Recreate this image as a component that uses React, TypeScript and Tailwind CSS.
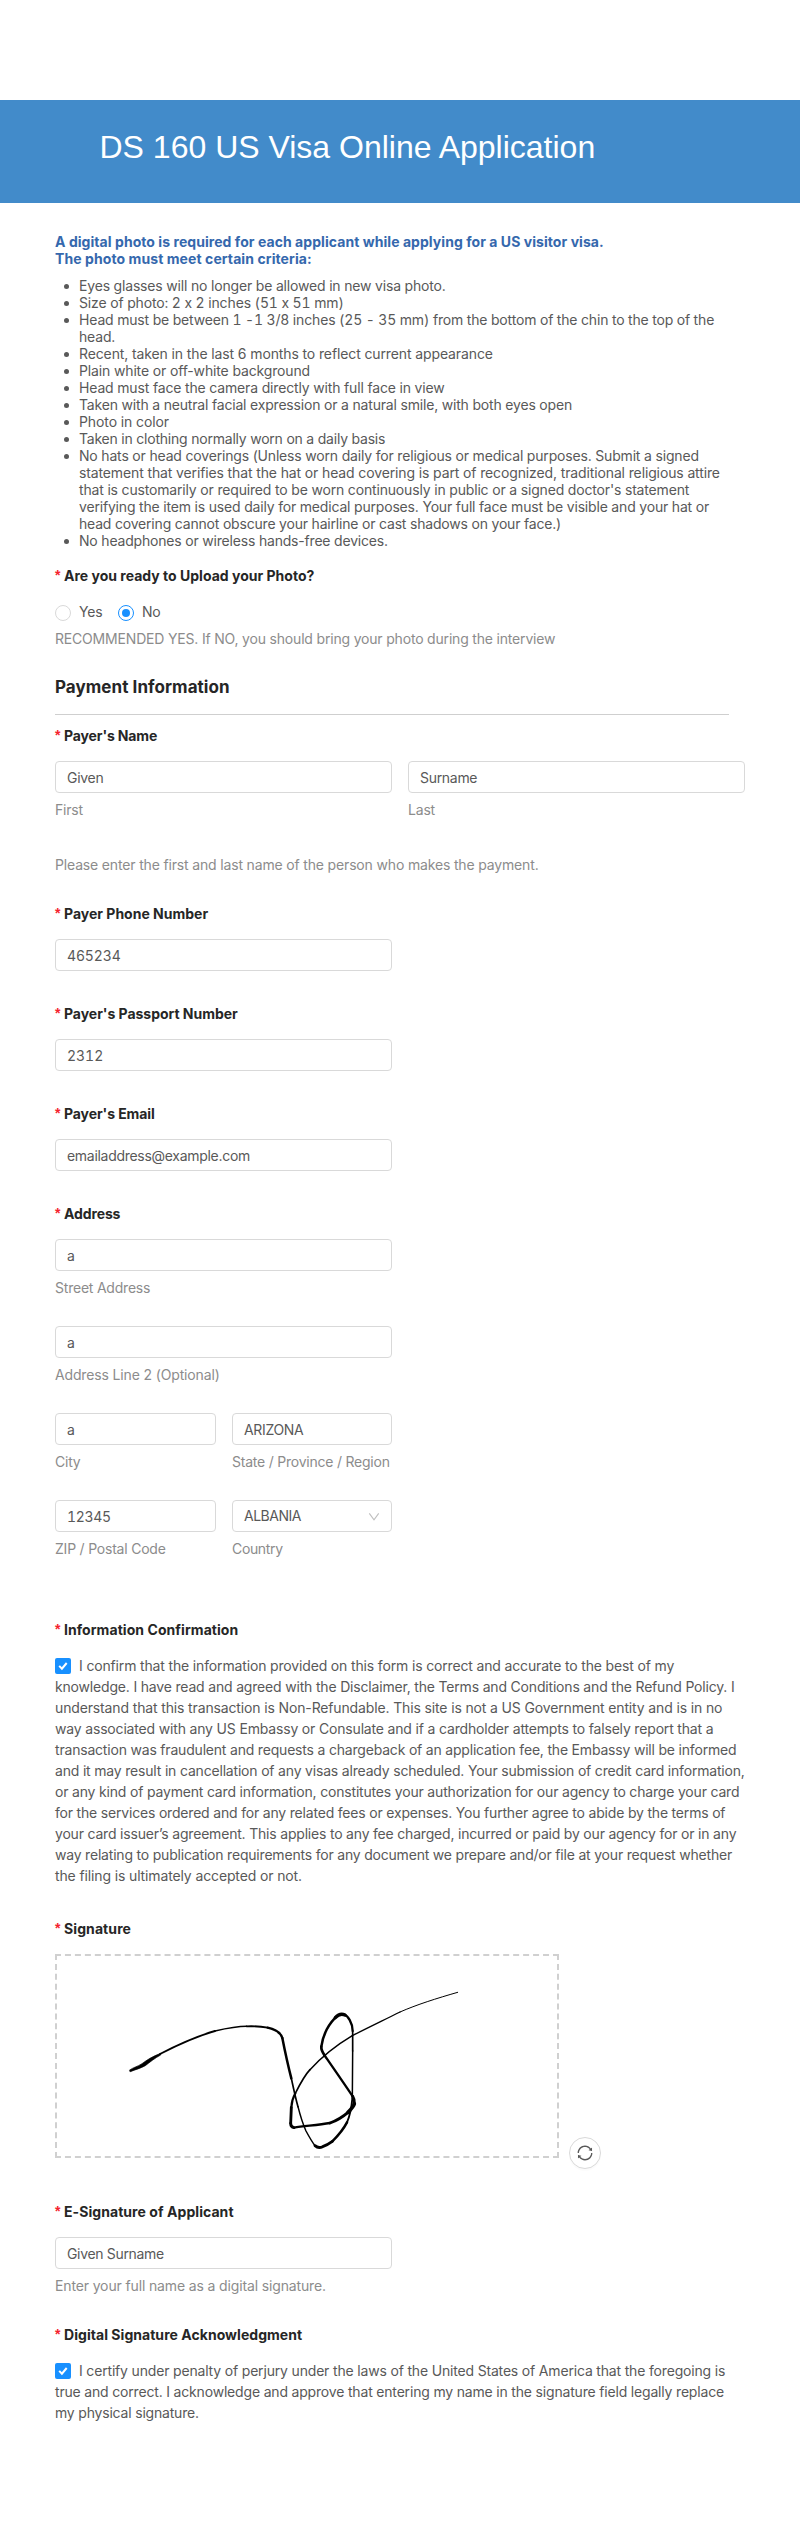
import React from "react";
import { AiOutlineSync } from "react-icons/ai";

type Line = [text: string, tracking: string];

const criteria: Line[][] = [
  [["Eyes glasses will no longer be allowed in new visa photo.", "tracking-[-0.179px]"]],
  [["Size of photo: 2 x 2 inches (51 x 51 mm)", "tracking-[-0.126px] tabular-nums"]],
  [
    ["Head must be between 1 -1 3/8 inches (25 - 35 mm) from the bottom of the chin to the top of the", "tracking-[-0.154px] tabular-nums"],
    ["head.", "tracking-[-0.18px]"],
  ],
  [["Recent, taken in the last 6 months to reflect current appearance", "tracking-[-0.118px]"]],
  [["Plain white or off-white background", "tracking-[-0.144px]"]],
  [["Head must face the camera directly with full face in view", "tracking-[-0.163px]"]],
  [["Taken with a neutral facial expression or a natural smile, with both eyes open", "tracking-[-0.185px]"]],
  [["Photo in color", "tracking-[-0.105px]"]],
  [["Taken in clothing normally worn on a daily basis", "tracking-[-0.215px]"]],
  [
    ["No hats or head coverings (Unless worn daily for religious or medical purposes. Submit a signed", "tracking-[-0.179px]"],
    ["statement that verifies that the hat or head covering is part of recognized, traditional religious attire", "tracking-[-0.127px]"],
    ["that is customarily or required to be worn continuously in public or a signed doctor's statement", "tracking-[-0.171px]"],
    ["verifying the item is used daily for medical purposes. Your full face must be visible and your hat or", "tracking-[-0.183px]"],
    ["head covering cannot obscure your hairline or cast shadows on your face.)", "tracking-[-0.194px]"],
  ],
  [["No headphones or wireless hands-free devices.", "tracking-[-0.19px]"]],
];

const confirmation: Line[] = [
  ["I confirm that the information provided on this form is correct and accurate to the best of my", "tracking-[-0.155px]"],
  ["knowledge. I have read and agreed with the Disclaimer, the Terms and Conditions and the Refund Policy. I", "tracking-[-0.182px]"],
  ["understand that this transaction is Non-Refundable. This site is not a US Government entity and is in no", "tracking-[-0.14px]"],
  ["way associated with any US Embassy or Consulate and if a cardholder attempts to falsely report that a", "tracking-[-0.172px]"],
  ["transaction was fraudulent and requests a chargeback of an application fee, the Embassy will be informed", "tracking-[-0.194px]"],
  ["and it may result in cancellation of any visas already scheduled. Your submission of credit card information,", "tracking-[-0.187px]"],
  ["or any kind of payment card information, constitutes your authorization for our agency to charge your card", "tracking-[-0.184px]"],
  ["for the services ordered and for any related fees or expenses. You further agree to abide by the terms of", "tracking-[-0.19px]"],
  ["your card issuer’s agreement. This applies to any fee charged, incurred or paid by our agency for or in any", "tracking-[-0.197px]"],
  ["way relating to publication requirements for any document we prepare and/or file at your request whether", "tracking-[-0.199px]"],
  ["the filing is ultimately accepted or not.", "tracking-[-0.13px]"],
];

const acknowledgment: Line[] = [
  ["I certify under penalty of perjury under the laws of the United States of America that the foregoing is", "tracking-[-0.174px]"],
  ["true and correct. I acknowledge and approve that entering my name in the signature field legally replace", "tracking-[-0.181px]"],
  ["my physical signature.", "tracking-[-0.192px]"],
];

function Label({ children, tracking = "tracking-[0.011px]" }: { children: string; tracking?: string }) {
  return (
    <div className="mb-[15px] flex h-[21px] font-bold text-[#262626]">
      <span className="w-[9px] font-['Liberation_Sans',sans-serif] text-[#f5222d]">*</span>
      <span className={tracking}>{children}</span>
    </div>
  );
}

function Input({ children, width = "w-[337px]", tracking = "tracking-[-0.3px]" }: { children: string; width?: string; tracking?: string }) {
  return (
    <div className={`h-8 rounded-[4px] border border-[#d9d9d9] bg-white pt-[5px] pl-[11px] ${width} ${tracking}`}>{children}</div>
  );
}

function Hint({ children, tracking = "tracking-[-0.2px]" }: { children: string; tracking?: string }) {
  return <div className={`mt-1.5 h-[21px] text-[#8c8c8c] ${tracking}`}>{children}</div>;
}

function Checked({ lines }: { lines: Line[] }) {
  return (
    <div>
      {lines.map(([text, tracking], i) => (
        <div key={i} className={`flex h-[21px] ${tracking}`}>
          {i === 0 && (
            <span className="mt-[3px] mr-2 flex size-4 shrink-0 items-center justify-center rounded-[2px] bg-[#1890ff]">
              <svg width="16" height="16" viewBox="0 0 16 16" fill="none" stroke="#fff" strokeWidth="2">
                <path d="M4.2 7.9 L6.9 10.7 L11.7 5" />
              </svg>
            </span>
          )}
          <span>{text}</span>
        </div>
      ))}
    </div>
  );
}

function Radio({ label, on = false }: { label: string; on?: boolean }) {
  return (
    <div className="flex w-[63px] tracking-[-0.18px]">
      <span className={`mt-1 mr-2 flex size-4 items-center justify-center rounded-full border ${on ? "border-[#1890ff]" : "border-[#d9d9d9]"}`}>
        {on && <span className="size-2 rounded-full bg-[#1890ff]" />}
      </span>
      {label}
    </div>
  );
}

const strokes: [string, number][] = [
  ["M180 252 C230 226 290 199 345 183", 5.5],
  ["M345 183 C380 175 410 169 440 169", 4.5],
  ["M440 169 C465 168 487 170 503 173", 5.5],
  ["M503 173 C525 178 542 187 547 204", 7],
  ["M547 204 C557 255 565 290 574 325", 7.5],
  ["M574 325 C582 362 588 390 594 410", 5],
  ["M594 410 C602 442 610 465 618 483 Q636 516 645 527", 4.5],
  ["M645 527 Q655 536 668 530 Q682 525 697 514", 8.5],
  ["M697 514 Q727 484 741 457", 7.5],
  ["M741 457 Q753 430 757 385", 5.5],
  ["M757 385 L758 243", 4.5],
  ["M758 243 L758 183", 5],
  ["M758 183 C758 158 743 137 733 134", 7],
  ["M735 135 C724 130 714 134 706 143", 10],
  ["M706 143 C682 168 668 200 664 230", 7.5],
  ["M664 230 Q663 240 673 255", 8],
  ["M673 255 C700 294 732 340 758 379", 7],
  ["M758 379 Q764 388 763 401", 9],
  ["M763 401 Q761 410 744 427", 11],
  ["M744 427 Q720 448 690 459", 8.5],
  ["M690 459 C655 465 615 468 582 473", 7],
  ["M582 473 Q572 472 572 460", 8.5],
  ["M572 460 L574 412", 8.5],
  ["M574 412 Q575 390 586 370", 6.5],
  ["M586 370 C600 342 613 317 630 299", 5],
  ["M630 299 C665 261 710 225 757 197", 4.5],
  ["M757 197 C810 170 850 151 900 126", 4],
  ["M900 126 C950 104 1010 85 1073 67", 3],
];

function Signature() {
  return (
    <svg width="500" height="200" viewBox="-129 -42 1500 600" fill="none" stroke="#000" strokeLinecap="round">
      <path fill="#000" strokeWidth="2" strokeLinejoin="round" d="M89 300 C100 292 112 290 126 281 C142 269 158 259 182 250 L182 255 C164 265 150 276 136 287 C122 295 108 298 91 305 Z" />
      {strokes.map(([d, w]) => (
        <path key={d} d={d} strokeWidth={w} />
      ))}
    </svg>
  );
}

export default function App() {
  return (
    <div className="h-[2531px] w-[800px] overflow-hidden bg-white pt-[100px] font-['Inter','Liberation_Sans',sans-serif] text-[14px] leading-[21px] whitespace-nowrap text-[#595959] [font-feature-settings:'calt'_0]">
      <header className="h-[103px] bg-[#428bca] pt-[29px] pl-[99.5px]">
        <h1 className="font-['Liberation_Sans',sans-serif] text-[32px] leading-[36px] text-white">DS 160 US Visa Online Application</h1>
      </header>

      <main className="pt-[30px] pl-[55px]">
        <div className="leading-[17px] font-bold text-[#3568ad]">
          <p className="tracking-[0.056px]">A digital photo is required for each applicant while applying for a US visitor visa.</p>
          <p className="tracking-[0.083px]">The photo must meet certain criteria:</p>
        </div>

        <ul className="mt-2.5 leading-[17px]">
          {criteria.map((lines, i) => (
            <li key={i} className="flex">
              <span className="mt-[7px] mr-[10px] ml-[9px] size-[5px] shrink-0 rounded-full bg-[#595959]" />
              <div>
                {lines.map(([text, tracking]) => (
                  <div key={text} className={tracking}>{text}</div>
                ))}
              </div>
            </li>
          ))}
        </ul>

        <section className="mt-4">
          <Label>Are you ready to Upload your Photo?</Label>
          <div className="flex h-[21px]">
            <Radio label="Yes" />
            <Radio label="No" on />
          </div>
          <Hint tracking="tracking-[-0.185px]">RECOMMENDED YES. If NO, you should bring your photo during the interview</Hint>
        </section>

        <h2 className="mt-7 h-5 text-[17px] leading-5 font-bold tracking-[0.058px] text-[#262626]">Payment Information</h2>
        <div className="mt-[17px] h-px w-[674px] bg-[#cfcfcf]" />

        <section className="mt-2.5">
          <Label tracking="tracking-[-0.124px]">Payer's Name</Label>
          <div className="flex gap-4">
            <div>
              <Input>Given</Input>
              <Hint>First</Hint>
            </div>
            <div>
              <Input>Surname</Input>
              <Hint>Last</Hint>
            </div>
          </div>
          <p className="mt-[34px] tracking-[-0.161px] text-[#8c8c8c]">Please enter the first and last name of the person who makes the payment.</p>
        </section>

        <section className="mt-7">
          <Label tracking="tracking-[0.001px]">Payer Phone Number</Label>
          <Input tracking="tracking-[-0.15px] tabular-nums">465234</Input>
        </section>
        <section className="mt-8">
          <Label tracking="tracking-[-0.03px]">Payer's Passport Number</Label>
          <Input tracking="tracking-[-0.03px] tabular-nums">2312</Input>
        </section>
        <section className="mt-8">
          <Label tracking="tracking-[-0.083px]">Payer's Email</Label>
          <Input tracking="tracking-[-0.293px]">emailaddress@example.com</Input>
        </section>

        <section className="mt-8">
          <Label tracking="tracking-[-0.12px]">Address</Label>
          <div className="flex flex-col gap-7">
            <div>
              <Input>a</Input>
              <Hint tracking="tracking-[-0.218px]">Street Address</Hint>
            </div>
            <div>
              <Input>a</Input>
              <Hint tracking="tracking-[-0.144px]">Address Line 2 (Optional)</Hint>
            </div>
            <div className="flex gap-4">
              <div>
                <Input width="w-[161px]">a</Input>
                <Hint>City</Hint>
              </div>
              <div>
                <Input width="w-[160px]" tracking="tracking-[-0.336px]">ARIZONA</Input>
                <Hint tracking="tracking-[-0.224px]">State / Province / Region</Hint>
              </div>
            </div>
            <div className="flex gap-4">
              <div>
                <Input width="w-[161px]" tracking="tracking-[-0.3px] tabular-nums">12345</Input>
                <Hint tracking="tracking-[-0.213px]">ZIP / Postal Code</Hint>
              </div>
              <div>
                <div className="flex h-8 w-[160px] justify-between rounded-[4px] border border-[#d9d9d9] bg-white pt-1 pr-[11px] pl-[11px] tracking-[-0.48px]">
                  ALBANIA
                  <svg className="mt-[7px]" width="12" height="10" viewBox="0 0 12 10" fill="none" stroke="#bfbfbf" strokeWidth="1.1">
                    <path d="M1.3 1.4 L6 7.9 L10.7 1.4" />
                  </svg>
                </div>
                <Hint tracking="tracking-[-0.35px]">Country</Hint>
              </div>
            </div>
          </div>
        </section>

        <section className="mt-[60px]">
          <Label tracking="tracking-[0.061px]">Information Confirmation</Label>
          <Checked lines={confirmation} />
        </section>

        <section className="mt-8">
          <Label tracking="tracking-[0.093px]">Signature</Label>
          <div className="flex items-end gap-2.5">
            <div className="h-[204px] w-[504px] border-2 border-dashed border-[#d0d0d0]">
              <Signature />
            </div>
            <button className="-mb-[11px] flex size-8 items-center justify-center rounded-full border border-[#d9d9d9] bg-white text-[#595959] shadow-[0_2px_0_rgba(0,0,0,0.015)]">
              <AiOutlineSync size={18} />
            </button>
          </div>
        </section>

        <section className="mt-[43px]">
          <Label tracking="tracking-[0.063px]">E-Signature of Applicant</Label>
          <Input tracking="tracking-[-0.329px]">Given Surname</Input>
          <Hint tracking="tracking-[-0.139px]">Enter your full name as a digital signature.</Hint>
        </section>

        <section className="mt-7">
          <Label tracking="tracking-[0.044px]">Digital Signature Acknowledgment</Label>
          <Checked lines={acknowledgment} />
        </section>
      </main>
    </div>
  );
}
